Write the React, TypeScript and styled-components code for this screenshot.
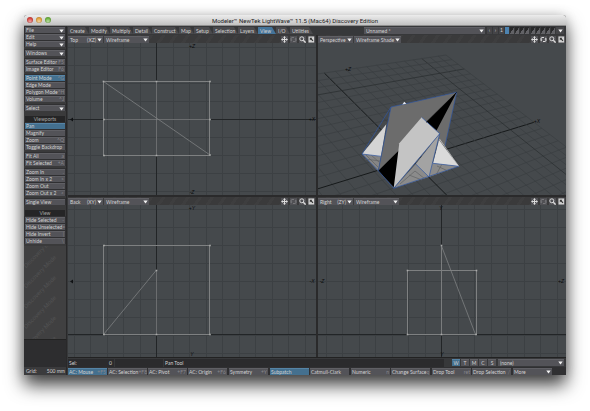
import React from "react";
import styled, { createGlobalStyle, css } from "styled-components";

const GlobalStyle = createGlobalStyle`
  * { box-sizing: border-box; }
  body { margin: 0; background: #fff; }
  button, select { font: inherit; color: inherit; margin: 0; border: 0; border-radius: 0; }
`;

const Desktop = styled.div`
  min-height: 100vh;
  padding: 15px 24px 36px;
  display: flex;
  font-family: Lato, "Liberation Sans", sans-serif;
  font-size: 5px;
  line-height: 6px;
  color: #d2d2d2;
`;

const Window = styled.div`
  flex: 1;
  min-width: 0;
  display: flex;
  flex-direction: column;
  background: #37383a;
  border-radius: 3px 3px 0 0;
  box-shadow: 0 10px 18px rgba(0, 0, 0, 0.75), 0 0 12px rgba(0, 0, 0, 0.15);
`;

const TitleBar = styled.header`
  height: 11px;
  display: grid;
  grid-template-columns: 43px 1fr 43px;
  align-items: center;
  background: linear-gradient(#ececec, #c2c2c2);
  border-bottom: 1px solid #8e8e8e;
  border-radius: 3px 3px 0 0;
`;

const Lights = styled.div`
  display: flex;
  gap: 3px;
  padding-left: 3px;
`;

const Light = styled.button<{ $c: string }>`
  width: 6px;
  height: 6px;
  padding: 0;
  border-radius: 50%;
  background: radial-gradient(circle at 50% 75%, #fff8, transparent 60%), ${(p) => p.$c};
  box-shadow: inset 0 0 1px #0009;
`;

const Title = styled.h1`
  margin: 0;
  font-family: Roboto, sans-serif;
  font-size: 6px;
  line-height: 9px;
  font-weight: 400;
  text-align: center;
  color: #1c1c1c;
`;

const Body = styled.div`
  flex: 1;
  display: grid;
  grid-template-columns: 43px minmax(0, 1fr);
`;

const Sidebar = styled.nav`
  display: flex;
  flex-direction: column;
  background: #3a3a3b;
  border-right: 1px solid #29292a;
`;

const Group = styled.div`
  display: flex;
  flex-direction: column;
  gap: 1px;
  padding: 1px 1px 0;
  margin-bottom: 2px;
  background: #303032;
`;

const face = css<{ $on?: boolean }>`
  background: ${(p) => (p.$on ? "#44708f" : "#535358")};
  border-top: 1px solid ${(p) => (p.$on ? "#5684a6" : "#606065")};
`;

const Command = styled.button<{ $on?: boolean }>`
  ${face}
  height: 6px;
  padding: 0 1px;
  display: flex;
  align-items: center;
  justify-content: space-between;
  line-height: 5px;
  white-space: nowrap;
  text-align: left;
`;

const Key = styled.span`
  color: #88888d;
`;

const Section = styled.h2`
  margin: 3px 1px 0;
  height: 6px;
  font-size: 5px;
  line-height: 6px;
  font-weight: 400;
  text-align: center;
  background: #252526;
  color: #a5a5a5;
`;

const Watermark = styled.div`
  flex: 1 1 0;
  min-height: 0;
  overflow: hidden;
  background: #404041;
  svg { display: block; width: 100%; height: 100%; }
`;

const InfoBox = styled.div`
  height: 28px;
  background: #2d2d2f;
  border-top: 1px solid #222;
`;

const GridInfo = styled.div`
  height: 8px;
  padding: 0 1px 0 2px;
  display: flex;
  align-items: center;
  justify-content: space-between;
  background: #3b3b3d;
`;

const Main = styled.main`
  display: flex;
  flex-direction: column;
  min-width: 0;
  padding-left: 1px;
`;

const TabBar = styled.div`
  height: 9px;
  display: flex;
  align-items: center;
  padding: 1px 2px 1px 0;
`;

const TabList = styled.div`
  display: flex;
  flex: 1;
`;

const Tab = styled.button<{ $w: number; $on?: boolean }>`
  flex: 0 1 ${(p) => p.$w}px;
  height: 7px;
  padding: 0 0 0 2px;
  text-align: left;
  white-space: nowrap;
  background: ${(p) => (p.$on ? "#44749a" : "#4a4a4d")};
  clip-path: polygon(0 0, calc(100% - 4px) 0, 100% 100%, 0 100%);
`;

const Picker = styled.label<{ $w: number }>`
  ${face}
  flex: 0 1 ${(p) => p.$w}px;
  height: 7px;
  display: grid;
  grid-template-columns: minmax(0, 1fr) 6px;
  align-items: center;
  padding: 0 1px;
`;

const Select = styled.select`
  appearance: none;
  grid-area: 1 / 1 / 2 / 3;
  width: 100%;
  height: 6px;
  padding: 0 0 0 1px;
  line-height: 6px;
  background: transparent;
`;

const PickerArrow = styled.span`
  grid-area: 1 / 2;
  display: flex;
  justify-content: center;
  pointer-events: none;
`;

const Layers = styled.div`
  display: flex;
  align-items: center;
  gap: 1px;
  margin-left: 2px;
`;

const LayerNav = styled.button<{ $wide?: boolean }>`
  width: ${(p) => (p.$wide ? 8 : 5)}px;
  height: 7px;
  padding: 0;
  line-height: 7px;
  display: flex;
  align-items: center;
  justify-content: center;
  background: #454548;
`;

const Layer = styled.button<{ $on?: boolean; $gap?: boolean }>`
  width: 4px;
  height: 7px;
  padding: 0;
  margin-left: ${(p) => (p.$gap ? 1 : 0)}px;
  background: ${(p) => (p.$on ? "#4d83b0" : "linear-gradient(125deg, #29292a 48%, #626266 52%)")};
`;

const Views = styled.div`
  flex: 1;
  display: grid;
  grid-template: minmax(0, 1fr) minmax(0, 1fr) / minmax(0, 1fr) minmax(0, 1fr);
  gap: 2px;
  background: #2a2a2b;
`;

const Viewport = styled.section`
  display: flex;
  flex-direction: column;
  min-width: 0;
`;

const ViewHeader = styled.div`
  height: 8px;
  display: flex;
  align-items: center;
  gap: 1px;
  background: repeating-linear-gradient(125deg, #3a3a3b 0 7px, #3e3e3f 7px 10px);
`;

const ViewKind = styled.button`
  ${face}
  flex: 0 1 35px;
  height: 7px;
  padding: 0 1px 0 2px;
  display: flex;
  align-items: center;
  gap: 1px;
  line-height: 6px;
  white-space: nowrap;
`;

const Grow = styled.span`
  flex: 1;
  text-align: left;
`;

const ViewTools = styled.div`
  display: flex;
  gap: 2px;
  margin-left: auto;
  padding-right: 1px;
`;

const ToolButton = styled.button<{ $dim?: boolean }>`
  width: 7px;
  height: 7px;
  padding: 0;
  display: flex;
  background: #505054;
  color: ${(p) => (p.$dim ? "#77777a" : "#dcdcdc")};
`;

const Canvas = styled.svg`
  flex: 1 1 0;
  min-height: 0;
  width: 100%;
  display: block;
  background: #45494c;
`;

const StatusRow = styled.div`
  height: 10px;
  display: flex;
  align-items: center;
  gap: 1px;
  padding-right: 2px;
  border-top: 1px solid #222;
`;

const Field = styled.div<{ $w?: number }>`
  flex: ${(p) => (p.$w ? `0 1 ${p.$w}px` : "1")};
  height: 8px;
  padding: 0 2px 0 1px;
  display: flex;
  align-items: center;
  justify-content: space-between;
  background: #2b2b2d;
`;

const MapModes = styled.div`
  display: flex;
  gap: 1px;
  margin: 0 1px 0 7px;
`;

const MapMode = styled.button<{ $on?: boolean }>`
  ${face}
  width: 8px;
  height: 7px;
  padding: 0;
  line-height: 6px;
`;

const Footer = styled.footer`
  height: 8px;
  display: flex;
  align-items: center;
  gap: 2px;
  background: #303032;
`;

const FooterGroup = styled.div`
  display: flex;
  gap: 1px;
  min-width: 0;
`;

const FooterButton = styled(Command)`
  flex: 0 1 39px;
  width: 39px;
  min-width: 0;
  height: 7px;
  line-height: 6px;
`;

const Arrow = () => (
  <svg width="5" height="4" viewBox="0 0 5 4" aria-hidden="true">
    <path d="M0.3 0.5H4.7L2.5 3.5Z" fill="#f2f2f2" />
  </svg>
);

type Item = [label: string, key?: string, state?: "menu" | "on"];

const TOP_GROUPS: Item[][] = [
  [["File", "", "menu"], ["Edit", "", "menu"], ["Help", "", "menu"]],
  [["Windows", "", "menu"]],
  [["Surface Editor", "F5"], ["Image Editor", "F6"]],
  [["Point Mode", "^G", "on"], ["Edge Mode"], ["Polygon Mode", "^H"], ["Volume", "^J"]],
  [["Select", "", "menu"]],
];
const VIEWPORT_GROUPS: Item[][] = [
  [["Pan", "", "on"], ["Magnify"], ["Zoom", "^Q"], ["Toggle Backdrop"]],
  [["Fit All", "a"], ["Fit Selected", "+A"]],
  [["Zoom In", "."], ["Zoom In x 2", ">"], ["Zoom Out", ","], ["Zoom Out x 2", "<"]],
  [["Single View"]],
];
const HIDE_GROUPS: Item[][] = [[["Hide Selected", "-"], ["Hide Unselected", "="], ["Hide Invert", "|"], ["Unhide", "\\"]]];

const Groups = ({ groups }: { groups: Item[][] }) => (
  <>
    {groups.map((g, i) => (
      <Group key={i}>
        {g.map(([label, key, state]) => (
          <Command key={label} $on={state === "on"}>
            <span>{label}</span>
            {state === "menu" ? <Arrow /> : key ? <Key>{key}</Key> : null}
          </Command>
        ))}
      </Group>
    ))}
  </>
);

const Picklist = ({ name, w, value }: { name: string; w: number; value: string }) => (
  <Picker $w={w}>
    <Select aria-label={name}>
      <option>{value}</option>
    </Select>
    <PickerArrow>
      <Arrow />
    </PickerArrow>
  </Picker>
);

const TABS: [string, number][] = [
  ["Create", 21], ["Modify", 21], ["Multiply", 23], ["Detail", 19], ["Construct", 27], ["Map", 15],
  ["Setup", 19], ["Selection", 25], ["Layers", 20], ["View", 18], ["I/O", 14], ["Utilities", 23],
];

const FOOTER: Item[][] = [
  [["AC: Mouse", "+F5", "on"], ["AC: Selection", "+F8"], ["AC: Pivot", "+F7"], ["AC: Origin", "+F6"]],
  [["Symmetry", "+Y"]],
  [["Subpatch", "", "on"], ["Catmull-Clark"]],
  [["Numeric", "n"], ["Change Surface", "q"]],
  [["Drop Tool", "ret"], ["Drop Selection", "/"]],
  [["More", "", "menu"]],
];

const ViewBar = ({ name, plane, mode }: { name: string; plane?: string; mode: string }) => (
  <ViewHeader>
    <ViewKind>
      <Grow>{name}</Grow>
      {plane}
      <Arrow />
    </ViewKind>
    <Picklist name={`${name} display`} w={plane ? 45 : 47} value={mode} />
    <ViewTools>
      <ToolButton aria-label="Move view">
        <svg width="7" height="7" viewBox="0 0 7 7" fill="currentColor">
          <path d="M3.5 0L5 1.8H4V3H5.2V2L7 3.5L5.2 5V4H4V5.2H5L3.5 7L2 5.2H3V4H1.8V5L0 3.5L1.8 2V3H3V1.8H2Z" />
        </svg>
      </ToolButton>
      <ToolButton aria-label="Rotate view" $dim={!!plane}>
        <svg width="7" height="7" viewBox="0 0 7 7" fill="currentColor">
          <path d="M0.5 4.6V2.2L2 1H4V2H2.2L1.5 2.6V3.6H2.4L1.2 5.4Z M6.5 2.4V4.8L5 6H3V5H4.8L5.5 4.4V3.4H4.6L5.8 1.6Z" />
        </svg>
      </ToolButton>
      <ToolButton aria-label="Zoom view">
        <svg width="7" height="7" viewBox="0 0 7 7" fill="none" stroke="currentColor">
          <circle cx="2.8" cy="2.8" r="2" />
          <path d="M4.3 4.3L6.6 6.6" strokeWidth="1.4" />
        </svg>
      </ToolButton>
      <ToolButton aria-label="Maximize view">
        <svg width="7" height="7" viewBox="0 0 7 7">
          <rect x="0.5" y="0.5" width="5.6" height="6" fill="#d4d4d4" />
          <path d="M1.8 1.8H4.4L3.6 2.6L5.4 4.4L4.6 5.2L2.8 3.4L1.8 4.4Z" fill="#333" />
        </svg>
      </ToolButton>
    </ViewTools>
  </ViewHeader>
);

const range = (from: number, count: number, step: number) => Array.from({ length: count }, (_, i) => from + i * step);

const GridLines = ({ x0, y0 }: { x0: number; y0: number }) => (
  <g stroke="#3c4043" strokeWidth="1">
    {range(x0, 16, 16.5).map((x) => (
      <path key={`x${x}`} d={`M${Math.floor(x) + 0.5} 0V153`} />
    ))}
    {range(y0, 9, 18).map((y) => (
      <path key={`y${y}`} d={`M0 ${y}H248`} />
    ))}
  </g>
);

const Label = styled.text`
  font: italic 5px "Liberation Sans", sans-serif;
  fill: #0a0b0c;
  text-anchor: middle;
`;

const WIRE = "#7e8081";

const Dots = ({ at }: { at: [number, number][] }) => (
  <g fill="#a9aaa9">
    {at.map(([x, y]) => (
      <rect key={`${x}-${y}`} x={x - 0.8} y={y - 0.8} width="1.6" height="1.6" />
    ))}
  </g>
);

const TopView = () => (
  <Canvas viewBox="0 0 248 152" preserveAspectRatio="xMidYMid slice">
    <GridLines x0={6} y0={4.5} />
    <path d="M88.5 0V152M0 76.5H248" stroke="#222527" />
    <g fill="none" stroke={WIRE}>
      <rect x="35.5" y="38.5" width="106" height="74" />
      <path d="M88.5 38V112M36 76.5H141M35.5 38.5L142 112" strokeWidth="0.8" />
    </g>
    <Dots at={[[35.5, 38.5], [88.5, 38.5], [142, 38.5], [142, 76.5], [36, 76.5], [36, 112.5], [88.5, 112.5], [142, 112]]} />
    <path d="M5 74.5L2 76.5L5 78.5Z" fill="#101214" />
    <Label x="124" y="5">+Z</Label>
    <Label x="124" y="151">-Z</Label>
    <Label x="244" y="78">+X</Label>
  </Canvas>
);

const BackView = () => (
  <Canvas viewBox="0 0 248 152" preserveAspectRatio="xMidYMid slice">
    <GridLines x0={6} y0={4.5} />
    <path d="M88.5 0V152M0 129.5H248" stroke="#222527" />
    <g fill="none" stroke={WIRE}>
      <rect x="35.5" y="40.5" width="106" height="89" />
      <path d="M88.5 65V129M35.5 129.5L88.5 65" strokeWidth="0.8" />
    </g>
    <Dots at={[[36, 40.5], [142, 40.5], [36, 129.5], [88.5, 129.5], [142, 129.5], [88.5, 65.5]]} />
    <path d="M5 74.5L2 76.5L5 78.5Z" fill="#101214" />
    <Label x="124" y="5">+Y</Label>
    <Label x="124" y="151">Y</Label>
    <Label x="244" y="78">-X</Label>
  </Canvas>
);

const RightView = () => (
  <Canvas viewBox="0 0 248 152" preserveAspectRatio="xMidYMid slice">
    <GridLines x0={8.2} y0={4.5} />
    <path d="M123.5 0V152M0 129.5H248" stroke="#222527" />
    <g fill="none" stroke={WIRE}>
      <rect x="89.5" y="65.5" width="69" height="64" />
      <path d="M123.5 41V129L123.5 41L157.5 129.5" strokeWidth="0.8" />
    </g>
    <Dots at={[[89.5, 65.5], [158.5, 65.5], [123.5, 40.5], [89.5, 129.5], [123.5, 129.5], [158, 129.5]]} />
    <Label x="123" y="5">Y</Label>
    <Label x="124" y="151">Y</Label>
    <Label x="4" y="78">-Z</Label>
    <Label x="243" y="78">+Z</Label>
  </Canvas>
);

/* Ground plane: maps unit coordinates (u along X, v along Z) onto the perspective view. */
const ground = (() => {
  const [x0, y0, x1, y1, x2, y2, x3, y3] = [93.5, 117, 216, 79.3, 128, 12, 6.3, 30];
  const dx1 = x1 - x2, dx2 = x3 - x2, dx3 = x0 - x1 + x2 - x3;
  const dy1 = y1 - y2, dy2 = y3 - y2, dy3 = y0 - y1 + y2 - y3;
  const det = dx1 * dy2 - dx2 * dy1;
  const g = (dx3 * dy2 - dx2 * dy3) / det;
  const h = (dx1 * dy3 - dx3 * dy1) / det;
  return (u: number, v: number) => {
    const w = g * u + h * v + 1;
    const x = ((x1 - x0 + g * x1) * u + (x3 - x0 + h * x3) * v + x0) / w;
    const y = ((y1 - y0 + g * y1) * u + (y3 - y0 + h * y3) * v + y0) / w;
    return `${x.toFixed(2)} ${y.toFixed(2)}`;
  };
})();

const STEPS = range(-13, 27, 1);
const shade = (n: number) => (n === 0 ? "#16191a" : n % 10 === 0 ? "#282c2e" : "#3a3e40");
const thick = (n: number) => (n === 0 ? 1 : 0.7);

const PerspectiveView = () => (
  <Canvas viewBox="0 0 248 152" preserveAspectRatio="xMidYMid slice">
    <g fill="none">
      {STEPS.map((n) => (
        <React.Fragment key={n}>
          <path d={`M${ground(-1, n / 13)}L${ground(1, n / 13)}`} stroke={shade(n)} strokeWidth={thick(n)} />
          <path d={`M${ground(n / 13, -1)}L${ground(n / 13, 1)}`} stroke={shade(n)} strokeWidth={thick(n)} />
        </React.Fragment>
      ))}
    </g>
    <Label x="30" y="28">+Z</Label>
    <Label x="219" y="80">+X</Label>
    <path d="M44 111L63 113L60 128Z" fill="#858585" />
    <path d="M75.7 145.3L97.7 121L115 120L140.7 123.3L111 134Z" fill="#8b8b8b" />
    <path d="M48 112L60 124M53 112L61 119M47 116L62 118M82 141L97 128L107 136M91 132L104 137M119 123L130 128M124 121L118 132" stroke="#626364" strokeWidth="0.7" fill="none" />
    <path d="M68.3 81.3L44 111L63 113.5Z" fill="#d4d4d4" />
    <path d="M73 64L138.7 49.3L127 103L120 99L60.3 127.7Z" fill="#6c6c6c" />
    <path d="M138.7 49.3L108 79.5L118.5 87.5Z" fill="#000" />
    <path d="M60.3 127.7L81.3 107L82 101L77 145.3Z" fill="#000" />
    <path d="M121 97L140.7 123.3L115 120.3Z" fill="#dadada" />
    <path d="M81.3 100.3L103.7 74.3L121.7 90.7L75.7 145.3Z" fill="#c4c4c4" />
    <path d="M121.7 90.7L97.7 121L111 134Z" fill="#a3a3a3" />
    <g fill="none" stroke="#2f56a0" strokeWidth="0.7" strokeLinejoin="round">
      <path d="M73 64L138.7 49.3L127 103M73 64L60.3 127.7M73 64L44 111L60.3 127.7L75.7 145.3L140.7 123.3L115 120.3M44 111L63 113.3" />
      <path d="M103.7 74.3L121.7 90.7L75.7 145.3M121.7 90.7L111 134L97.7 121" />
      <path d="M138.7 49.3L108 79.5" stroke="#000" />
    </g>
    <path d="M84.3 61.5L86.3 58.8L88.3 60.8Z" fill="#e4e8f0" />
    <path d="M121.5 96L140.7 123.3" stroke="#e4e4e4" strokeWidth="0.6" />
  </Canvas>
);

const WatermarkText = styled.text`
  font: 6px "Liberation Sans", sans-serif;
  fill: #525253;
`;

export default function App() {
  return (
    <>
      <GlobalStyle />
      <Desktop>
        <Window>
          <TitleBar>
            <Lights>
              <Light $c="#d8453f" aria-label="Close" />
              <Light $c="#e2a13b" aria-label="Minimize" />
              <Light $c="#6db33f" aria-label="Zoom" />
            </Lights>
            <Title>Modeler™ NewTek LightWave™ 11.5 (Mac64) Discovery Edition</Title>
          </TitleBar>
          <Body>
            <Sidebar>
              <Groups groups={TOP_GROUPS} />
              <Section>Viewports</Section>
              <Groups groups={VIEWPORT_GROUPS} />
              <Section>View</Section>
              <Groups groups={HIDE_GROUPS} />
              <Watermark>
                <svg viewBox="0 0 42 92" preserveAspectRatio="xMinYMin slice" aria-hidden="true">
                  {range(22, 6, 20).map((y) => (
                    <WatermarkText key={y} transform={`translate(2 ${y}) rotate(-45)`}>
                      {(y / 20) % 2 < 1.2 ? "Discovery Mode" : "Mode - Discovery"}
                    </WatermarkText>
                  ))}
                </svg>
              </Watermark>
              <InfoBox />
              <GridInfo>
                <span>Grid:</span>
                <span>500 mm</span>
              </GridInfo>
            </Sidebar>
            <Main>
              <TabBar>
                <TabList>
                  {TABS.map(([label, w]) => (
                    <Tab key={label} $w={w} $on={label === "View"}>
                      {label}
                    </Tab>
                  ))}
                </TabList>
                <Picklist name="Object" w={121} value="Unnamed *" />
                <Layers>
                  <LayerNav aria-label="Previous bank">‹</LayerNav>
                  <LayerNav aria-label="Next bank">›</LayerNav>
                  <LayerNav>1</LayerNav>
                  {range(1, 10, 1).map((n) => (
                    <Layer key={n} $on={n === 1} $gap={n === 6} aria-label={`Layer ${n}`} />
                  ))}
                  <LayerNav $wide aria-label="Layer menu">
                    <Arrow />
                  </LayerNav>
                </Layers>
              </TabBar>
              <Views>
                <Viewport>
                  <ViewBar name="Top" plane="(XZ)" mode="Wireframe" />
                  <TopView />
                </Viewport>
                <Viewport>
                  <ViewBar name="Perspective" mode="Wireframe Shade" />
                  <PerspectiveView />
                </Viewport>
                <Viewport>
                  <ViewBar name="Back" plane="(XY)" mode="Wireframe" />
                  <BackView />
                </Viewport>
                <Viewport>
                  <ViewBar name="Right" plane="(ZY)" mode="Wireframe" />
                  <RightView />
                </Viewport>
              </Views>
              <StatusRow>
                <Field $w={46}>
                  <span>Sel:</span>
                  <span>0</span>
                </Field>
                <Field $w={48} />
                <Field>Pan Tool</Field>
                <MapModes>
                  {["W", "T", "M", "C", "S"].map((m) => (
                    <MapMode key={m} $on={m === "W"}>
                      {m}
                    </MapMode>
                  ))}
                </MapModes>
                <Picklist name="Vertex map" w={66} value="(none)" />
              </StatusRow>
              <Footer>
                {FOOTER.map((g, i) => (
                  <FooterGroup key={i}>
                    {g.map(([label, key, state]) => (
                      <FooterButton key={label} $on={state === "on"}>
                        <span>{label}</span>
                        {state === "menu" ? <Arrow /> : key ? <Key>{key}</Key> : null}
                      </FooterButton>
                    ))}
                  </FooterGroup>
                ))}
              </Footer>
            </Main>
          </Body>
        </Window>
      </Desktop>
    </>
  );
}
